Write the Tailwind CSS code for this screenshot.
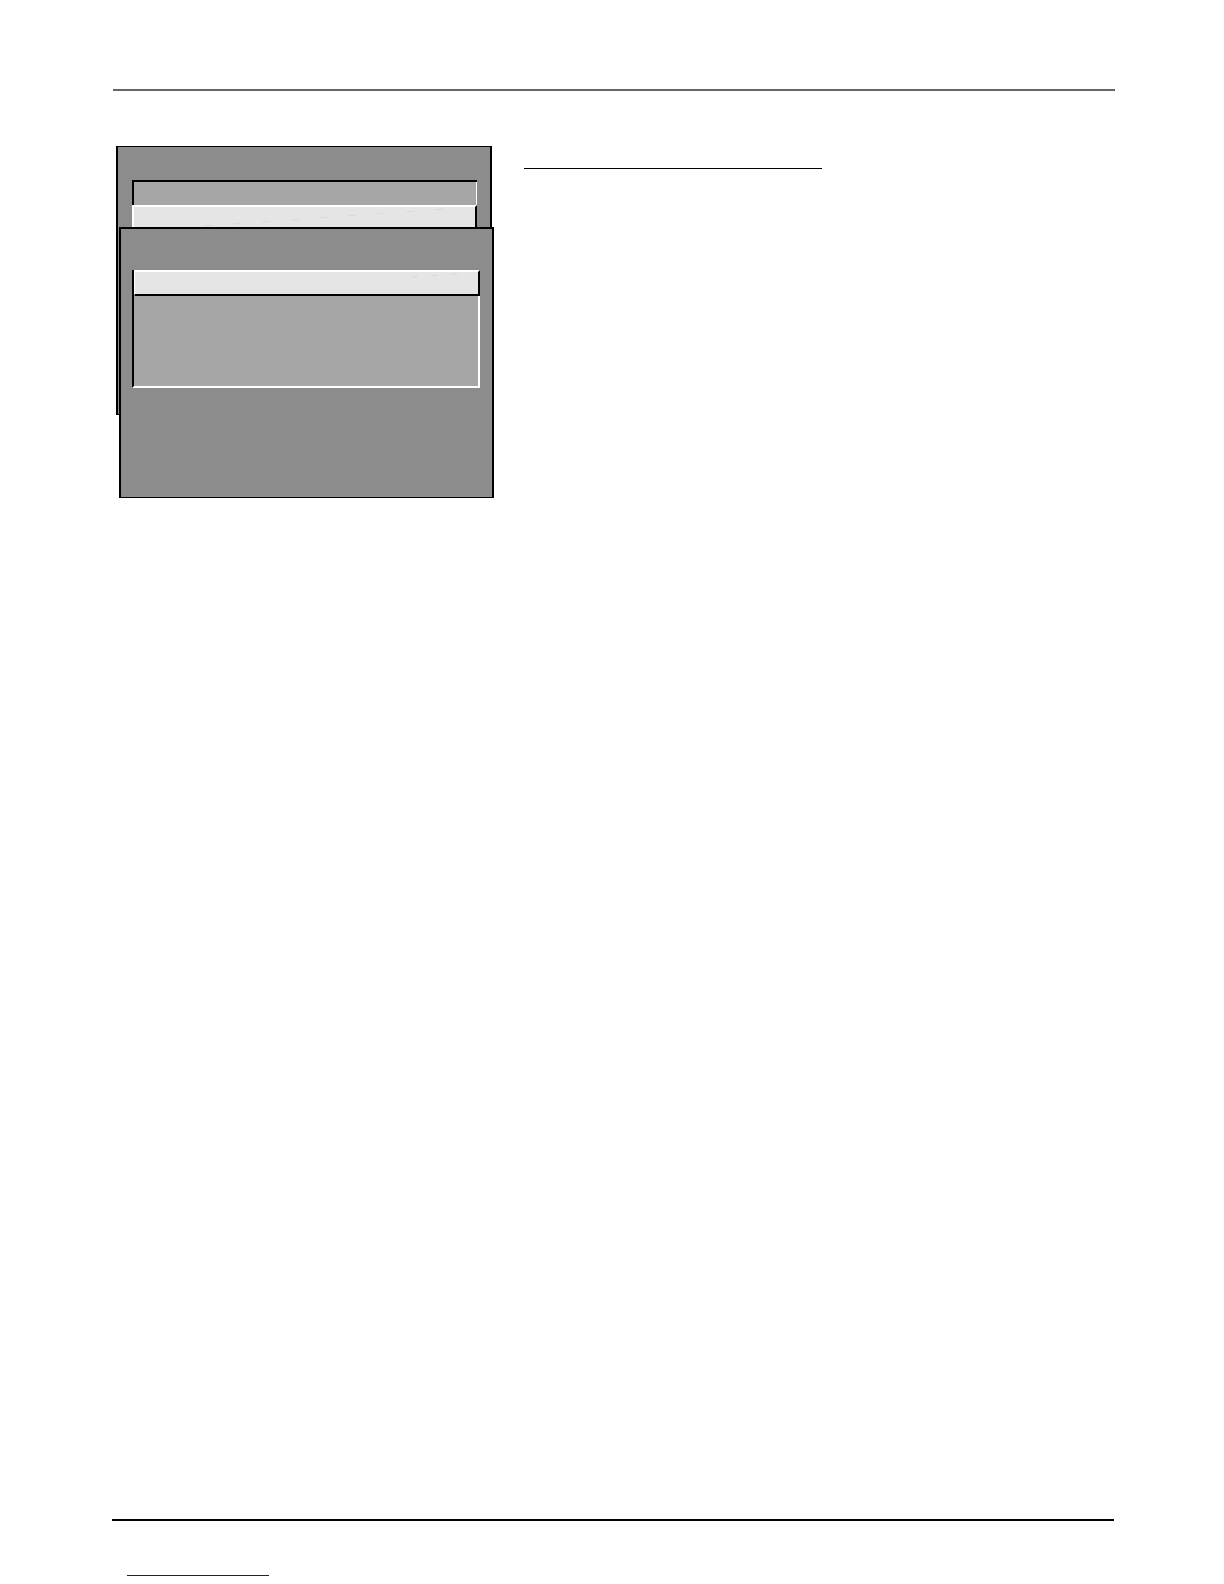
<!DOCTYPE html>
<html lang="en">
<head>
<meta charset="utf-8">
<title>Menu screens</title>
<meta name="viewport" content="width=device-width, initial-scale=1">
<script src="https://cdn.jsdelivr.net/npm/@tailwindcss/browser@4"></script>
</head>
<body class="bg-white">
<div class="flex min-h-screen flex-col pt-[89px] pb-2">
  <header class="ml-[113px] mr-[109px] h-[2px] bg-[#696565]"></header>

  <main class="ml-[116px] mr-[109px] mt-[55px] flex grow items-start gap-[30px]">
    <!-- two overlapping menu windows -->
    <figure class="relative h-[352px] w-[378px] shrink-0" aria-label="Menu windows">
      <section class="h-[269px] w-[376px] border-x-2 border-y border-black bg-[#8c8c8c] px-[14px] pt-[33px]">
        <div class="h-[100px] w-[345px] border-t-2 border-black bg-[#a6a6a6]">
          <div class="h-[23px] border-l-2 border-r border-l-black border-r-white"></div>
          <div class="relative h-[30px] border-2 border-t-white border-r-black border-b-black border-l-white bg-[#e5e5e5]">
            <svg class="h-5 w-full" viewBox="0 0 341 20" preserveAspectRatio="none" fill="none" aria-hidden="true"><path d="M70 19 L325 1" stroke="#d9d9d9" stroke-dasharray="8 21"/></svg>
          </div>
        </div>
      </section>

      <section class="absolute left-[3px] top-[81px] h-[271px] w-[375px] border-2 border-b border-black bg-[#8c8c8c] pl-[11px] pt-[41px]">
        <div class="h-[118px] w-[348px] border-b-2 border-l-2 border-l-black border-b-white bg-[#a6a6a6]">
          <div class="h-[26px] border-2 border-l border-t-white border-r-black border-b-black border-l-white bg-[#e5e5e5]">
            <svg class="h-5 w-full" viewBox="0 0 343 20" preserveAspectRatio="none" fill="none" aria-hidden="true"><path d="M277 5 L335 1" stroke="#d9d9d9" stroke-dasharray="6 14"/></svg>
          </div>
          <div class="h-[90px] border-r-2 border-white"></div>
        </div>
      </section>
    </figure>

    <div class="mt-[22px] h-px w-[298px] bg-black"></div>
  </main>

  <footer class="ml-[112px] mr-[110px]">
    <div class="h-[2px] bg-black"></div>
    <a href="#" aria-label="Website" class="ml-[15px] mt-[54px] block h-px w-[142px] bg-[#1c1291]"></a>
  </footer>
</div>
</body>
</html>
